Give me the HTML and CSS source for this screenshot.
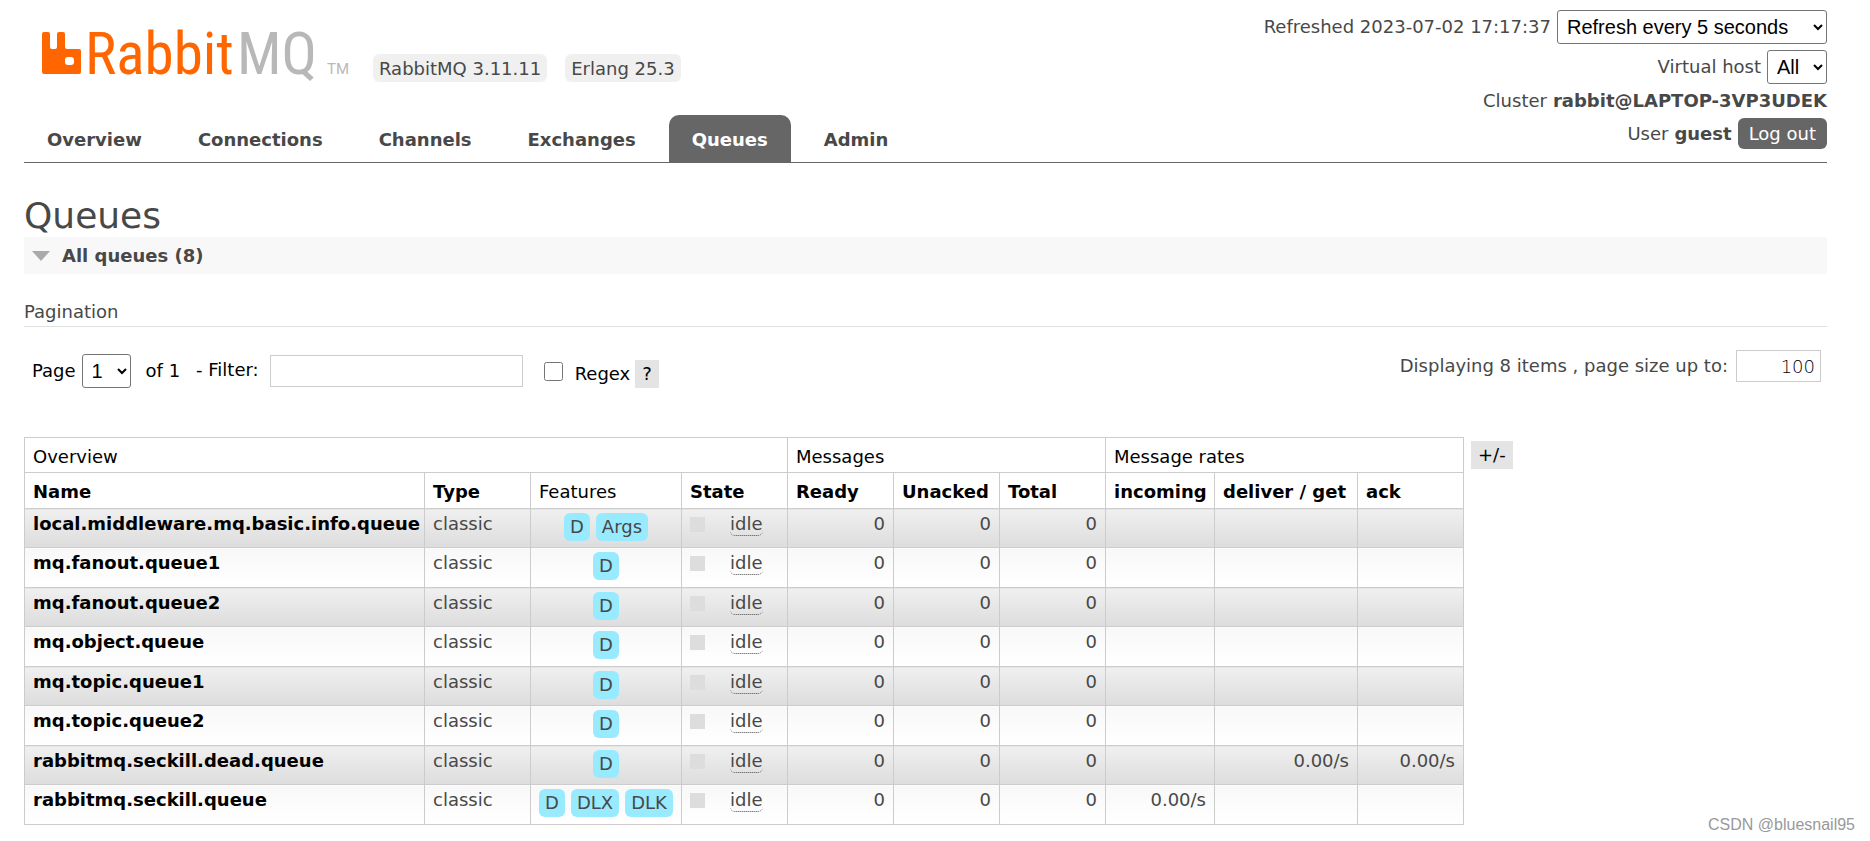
FILE: index.html
```html
<!DOCTYPE html>
<html lang="en">
<head>
<meta charset="utf-8">
<title>RabbitMQ Management</title>
<link rel="stylesheet" href="styles.css">
</head>
<body>
<header class="header">
  <div class="header-main">
    <div class="brand">
      <svg class="logo" width="310" height="60" viewBox="0 -8 310 60" role="img" aria-label="RabbitMQ">
        <path fill="#f60" fill-rule="evenodd" d="M3 4h4q2 0 2 2v13q0 2 2 2h3q2 0 2-2v-13q0-2 2-2h4q2 0 2 2v13q0 2 2 2h12q2 0 2 2v21q0 2-2 2h-35q-2 0-2-2v-38q0-2 2-2zM27 29q-3 0-3 3v2q0 3 3 3h3q3 0 3-3v-2q0-3-3-3z"/>
        <text class="logo-text" x="44" y="46" fill="#f60">Rabbit</text>
        <text class="logo-text" x="196" y="46" fill="#b8b8b8">MQ</text>
        <text class="logo-tm" x="286" y="46" fill="#b8b8b8">TM</text>
      </svg>
      <span class="version">RabbitMQ 3.11.11</span>
      <span class="version">Erlang 25.3</span>
    </div>
    <nav class="tabs">
      <a class="tab" href="#overview">Overview</a>
      <a class="tab" href="#connections">Connections</a>
      <a class="tab" href="#channels">Channels</a>
      <a class="tab" href="#exchanges">Exchanges</a>
      <a class="tab selected" href="#queues">Queues</a>
      <a class="tab" href="#admin">Admin</a>
    </nav>
  </div>
  <div class="status">
    <div class="status-row"><label for="refresh">Refreshed 2023-07-02 17:17:37</label><select class="select refresh" id="refresh"><option>Refresh every 5 seconds</option></select></div>
    <div class="status-row"><label for="vhost">Virtual host</label><select class="select vhost" id="vhost"><option>All</option></select></div>
    <div class="status-row">Cluster <b>rabbit@LAPTOP-3VP3UDEK</b></div>
    <div class="status-row">User <b>guest</b><button class="logout" type="button">Log out</button></div>
  </div>
</header>
<main>
  <h1 class="title">Queues</h1>
  <h2 class="section"><span class="arrow"></span>All queues (8)</h2>
  <h3 class="subhead">Pagination</h3>
  <div class="pagination">
    <div class="filters">
      <label for="page">Page</label>
      <select class="select page" id="page"><option>1</option></select>
      <span class="pages">of 1</span>
      <label class="filter-label" for="filter">- Filter:</label>
      <input class="box filter" id="filter" type="text">
      <input class="check" id="regex" type="checkbox">
      <label class="regex" for="regex">Regex</label>
      <button class="small-button" type="button">?</button>
    </div>
    <div class="page-size">
      <label for="size">Displaying 8 items , page size up to:</label>
      <input class="box size" id="size" type="text" value="100">
    </div>
  </div>
  <div class="listing">
    <table class="queues">
      <colgroup><col class="c-name"><col class="c-std"><col class="c-features"><col class="c-std"><col class="c-std"><col class="c-std"><col class="c-std"><col class="c-in"><col class="c-get"><col class="c-std"></colgroup>
      <thead>
        <tr><th class="plain" colspan="4">Overview</th><th class="plain" colspan="3">Messages</th><th class="plain" colspan="3">Message rates</th></tr>
        <tr><th>Name</th><th>Type</th><th class="plain">Features</th><th>State</th><th>Ready</th><th>Unacked</th><th>Total</th><th>incoming</th><th>deliver / get</th><th>ack</th></tr>
      </thead>
      <tbody>
        <tr><td><a class="queue" href="#q1">local.middleware.mq.basic.info.queue</a></td><td>classic</td><td><div class="tags"><span class="tag">D</span><span class="tag">Args</span></div></td><td><div class="state"><span class="idle">idle</span></div></td><td class="num">0</td><td class="num">0</td><td class="num">0</td><td class="num"></td><td class="num"></td><td class="num"></td></tr>
        <tr><td><a class="queue" href="#q2">mq.fanout.queue1</a></td><td>classic</td><td><div class="tags"><span class="tag">D</span></div></td><td><div class="state"><span class="idle">idle</span></div></td><td class="num">0</td><td class="num">0</td><td class="num">0</td><td class="num"></td><td class="num"></td><td class="num"></td></tr>
        <tr><td><a class="queue" href="#q3">mq.fanout.queue2</a></td><td>classic</td><td><div class="tags"><span class="tag">D</span></div></td><td><div class="state"><span class="idle">idle</span></div></td><td class="num">0</td><td class="num">0</td><td class="num">0</td><td class="num"></td><td class="num"></td><td class="num"></td></tr>
        <tr><td><a class="queue" href="#q4">mq.object.queue</a></td><td>classic</td><td><div class="tags"><span class="tag">D</span></div></td><td><div class="state"><span class="idle">idle</span></div></td><td class="num">0</td><td class="num">0</td><td class="num">0</td><td class="num"></td><td class="num"></td><td class="num"></td></tr>
        <tr><td><a class="queue" href="#q5">mq.topic.queue1</a></td><td>classic</td><td><div class="tags"><span class="tag">D</span></div></td><td><div class="state"><span class="idle">idle</span></div></td><td class="num">0</td><td class="num">0</td><td class="num">0</td><td class="num"></td><td class="num"></td><td class="num"></td></tr>
        <tr><td><a class="queue" href="#q6">mq.topic.queue2</a></td><td>classic</td><td><div class="tags"><span class="tag">D</span></div></td><td><div class="state"><span class="idle">idle</span></div></td><td class="num">0</td><td class="num">0</td><td class="num">0</td><td class="num"></td><td class="num"></td><td class="num"></td></tr>
        <tr><td><a class="queue" href="#q7">rabbitmq.seckill.dead.queue</a></td><td>classic</td><td><div class="tags"><span class="tag">D</span></div></td><td><div class="state"><span class="idle">idle</span></div></td><td class="num">0</td><td class="num">0</td><td class="num">0</td><td class="num"></td><td class="num">0.00/s</td><td class="num">0.00/s</td></tr>
        <tr><td><a class="queue" href="#q8">rabbitmq.seckill.queue</a></td><td>classic</td><td><div class="tags"><span class="tag">D</span><span class="tag">DLX</span><span class="tag">DLK</span></div></td><td><div class="state"><span class="idle">idle</span></div></td><td class="num">0</td><td class="num">0</td><td class="num">0</td><td class="num">0.00/s</td><td class="num"></td><td class="num"></td></tr>
      </tbody>
    </table>
    <button class="small-button columns" type="button">+/-</button>
  </div>
</main>
<div class="watermark">CSDN @bluesnail95</div>
</body>
</html>
```

FILE: styles.css
```css
* { box-sizing: border-box; }
body {
  margin: 0;
  padding: 0 43px 0 24px;
  background: #fff;
  color: #484848;
  font: 18px/22px Verdana, "DejaVu Sans", sans-serif;
}
a { color: inherit; text-decoration: none; }
button, input { font: inherit; }
button { border: 0; cursor: pointer; white-space: nowrap; }

.header { display: flex; justify-content: space-between; border-bottom: 1px solid #666; }
.header-main { display: flex; flex-direction: column; justify-content: space-between; }
.brand { display: flex; align-items: flex-end; gap: 18px; padding: 20px 0 0 17px; }
.logo { display: block; margin-right: 4px; overflow: visible; }
.logo-text { font: 400 59px "Roboto Condensed", Roboto, "Liberation Sans", sans-serif; }
.logo-tm { font: 15px Roboto, "Liberation Sans", Arial, sans-serif; }
.version { margin-bottom: -2px; padding: 4px 6px 2px; border-radius: 6px; background: #f0f0f0; }
.tabs { display: flex; gap: 10px; }
.tab { padding: 14px 23px 11px; border-radius: 10px 10px 0 0; font-weight: bold; }
.tab.selected { background: #666; color: #fff; }

.status { display: flex; flex-direction: column; align-items: flex-end; gap: 6px; padding: 10px 0 13px; }
.status-row { display: flex; align-items: center; gap: 6px; }
.select {
  height: 34px;
  padding: 0 5px;
  border: 1px solid #767676;
  border-radius: 3px;
  background: #fff;
  color: #000;
  font: 20px "Liberation Sans", Arial, sans-serif;
}
.refresh { width: 270px; }
.vhost { width: 60px; }
.logout { height: 31px; padding: 0 11px; border-radius: 6px; background: #666; color: #fff; }

.title { margin: 31px 0 0; font-size: 36px; line-height: 43px; font-weight: normal; }
.section { display: flex; align-items: center; gap: 12px; margin: 0; padding: 8px 8px 7px; background: #f8f8f8; font-size: 18px; }
.arrow { border: 9px solid transparent; border-top: 10px solid #aaa; border-bottom: 0; }
.subhead { margin: 27px 0 0; padding-bottom: 3px; border-bottom: 1px solid #e0e0e0; font-size: 18px; font-weight: normal; }
.pagination { display: flex; justify-content: space-between; align-items: flex-start; padding: 23px 6px 0 8px; }
.filters { display: flex; align-items: center; padding-top: 4px; color: #000; }
.page { width: 49px; margin: 0 15px 0 6px; }
.filter-label { margin: 0 11px 3px 16px; }
.box { height: 32px; border: 1px solid #ccc; background: #fff; color: #000; padding: 0 5px; }
.filter { width: 253px; }
.check { width: 19px; height: 19px; margin: 0 12px 0 21px; }
.regex { margin: 6px 5px 0 0; }
.small-button { height: 28px; padding: 0 7px; background: #e4e4e4; color: #000; }
.filters .small-button { margin-top: 6px; }
.page-size { display: flex; align-items: center; gap: 8px; }
.size { width: 85px; text-align: right; font-weight: 200; }

.listing { display: flex; align-items: flex-start; gap: 7px; padding-top: 49px; }
.columns { margin-top: 4px; }
.queues { border-collapse: collapse; table-layout: fixed; width: 1440px; }
.c-name { width: 400px; }
.c-std { width: 106px; }
.c-features { width: 151px; }
.c-in { width: 109px; }
.c-get { width: 143px; }
.queues th { padding: 8px 8px 5px; border: 1px solid #ccc; color: #000; text-align: left; white-space: nowrap; }
.queues .plain { font-weight: normal; }
.queues th[colspan] { padding-bottom: 4px; }
.queues td { height: 39px; padding: 4px 8px 0; border: 1px solid #ccc; vertical-align: top; white-space: nowrap; }
.queues tbody tr:nth-child(even) td { height: 40px; background: linear-gradient(#f8f8f8, #fff); }
.queues tbody tr:nth-child(odd) td { background: linear-gradient(#f0f0f0, #ddd); }
.queue { color: #000; font-weight: bold; }
.queues .num { text-align: right; }
.tags { display: flex; justify-content: center; gap: 6px; }
.tag { padding: 3px 6px; border-radius: 6px; background: #98ebff; }
.state { display: flex; align-items: center; gap: 25px; }
.state::before { content: ""; width: 15px; height: 15px; background: #ddd; }
.idle { border-bottom: 1px dotted #484848; border-radius: 5px; }

.watermark {
  position: absolute;
  right: 15px;
  bottom: 6px;
  color: #999;
  font: 16px/20px "Liberation Sans", Arial, sans-serif;
}
```
